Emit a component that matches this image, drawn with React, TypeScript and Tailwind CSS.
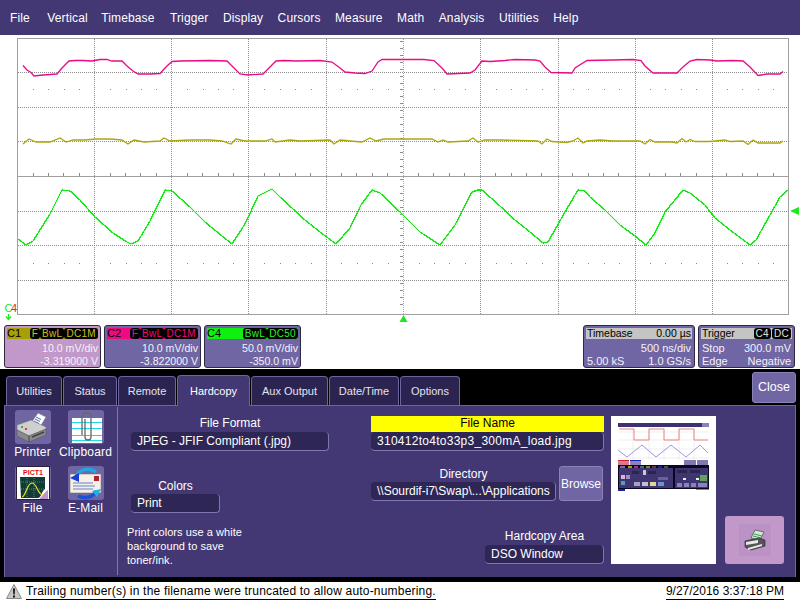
import React from "react";

const pink: [number, number][] = [[23,65.5],[27,70],[31,72.5],[34,76],[43,75],[57,74],[62,68],[69,61],[75,60.5],[83,60.5],[92,61],[100,59.5],[107,59.5],[112,61],[122,61],[127,66],[133,71],[138,74],[150,74],[160,73.5],[167,66],[172,61.5],[180,61],[210,60.5],[227,61],[232,66],[240,74],[248,75],[263,74],[270,67],[276,61],[284,60.5],[296,61],[320,60.5],[332,62],[340,68],[345,72],[355,73],[365,73.5],[372,71],[378,62],[382,59.5],[400,59.5],[424,59.5],[434,60.5],[442,68],[447,74],[470,73],[475,70],[482,61],[490,61.5],[505,60.5],[515,59.5],[535,60],[540,61],[545,67],[551,72.5],[572,73],[575,68],[587,60.5],[613,60],[633,59.5],[641,60.5],[645,66],[653,73],[677,73],[683,67],[690,61],[697,59.5],[710,60],[717,61],[733,60.5],[743,61],[750,67],[758,75.5],[767,74],[780,74],[783,71.5]];
const olive: [number, number][] = [[23,144],[29,139],[36,142],[50,142],[60,138],[66,142],[73,140],[85,140],[96,139],[110,139],[122,140],[128,144],[134,140],[144,142],[160,141],[164,138],[170,141],[190,140],[210,140],[222,141],[231,144],[236,139],[245,141],[265,141],[272,139],[275,142],[290,140],[300,141],[330,140],[334,144],[340,140],[350,141],[362,142],[370,138],[376,141],[384,139],[400,139],[432,139],[438,142],[443,140],[448,142],[468,141],[473,138],[478,142],[485,140],[500,140],[538,141],[542,144],[547,139],[552,141.5],[567,142.5],[573,141],[578,138],[583,143],[587,141],[600,140],[613,141],[640,141],[645,144],[650,139.5],[655,142],[672,142],[677,143],[682,138.5],[686,142],[690,139.5],[695,141.5],[710,141.5],[725,140],[730,141.5],[743,141],[748,144.5],[753,140],[758,143],[780,143],[783,141]];
const green: [number, number][] = [[18,239],[26,245],[33,241],[50,214],[62,190],[70,191],[80,200],[95,217],[113,233],[127,242],[131,244],[138,241],[150,221],[165,190],[172,191],[190,207],[205,222],[222,236],[232,244],[245,224],[258,196],[272,189],[280,197],[305,220],[320,232],[336,244],[350,228],[361,205],[372,190],[380,193],[400,212],[420,232],[440,245],[455,225],[472,192],[478,190],[482,190],[500,206],[515,220],[530,232],[543,243],[548,242],[565,212],[578,190],[585,191],[590,197],[605,210],[620,225],[635,236],[646,245],[655,233],[665,212],[683,190],[690,193],[705,205],[715,218],[730,230],[750,245],[756,240],[770,215],[780,197],[788,190]];

const toPoints = (p: [number, number][]) => p.map((q) => q.join(",")).join(" ");

const vGrid = [94.5, 171.5, 248.5, 326.5, 480.5, 558.5, 635.5, 712.5];
const hGrid = [72.5, 107.5, 141.5, 211.5, 245.5, 280.5];
const xTicks = Array.from({ length: 49 }, (_, i) => 33 + i * 15.42).filter((x) => !vGrid.some((v) => Math.abs(v - x) < 4) && Math.abs(x - 403) > 4 && x < 785);
const yTicks = Array.from({ length: 39 }, (_, i) => 41.5 + i * 6.92);

function Graph() {
  return (
    <svg viewBox="0 35 800 290" className="block w-[800px] h-[290px]" fontFamily="'Liberation Sans', Arial, sans-serif">
      <g shapeRendering="crispEdges">
        <rect x="17.5" y="38.5" width="771" height="276" fill="#fff" stroke="#a0a0a0" />
        {vGrid.map((x) => (
          <line key={x} x1={x} x2={x} y1="39" y2="314" stroke="#8c8c8c" strokeDasharray="1 1" />
        ))}
        <line x1="403.5" x2="403.5" y1="39" y2="314" stroke="#a8a8a8" strokeDasharray="1 1" />
        {hGrid.map((y) => (
          <line key={y} x1="18" x2="788" y1={y} y2={y} stroke="#8c8c8c" strokeDasharray="1 1" />
        ))}
        <line x1="18" x2="788" y1="176.5" y2="176.5" stroke="#a0a0a0" />
        {xTicks.map((x) => (
          <g key={x}>
            <line x1={x} x2={x} y1="173" y2="176" stroke="#8c8c8c" />
            <rect x={x} y="89" width="1" height="1" fill="#8c8c8c" />
            <rect x={x} y="263" width="1" height="1" fill="#8c8c8c" />
          </g>
        ))}
        {yTicks.map((y) => (
          <line key={y} x1="400" x2="403" y1={y} y2={y} stroke="#8c8c8c" />
        ))}
      </g>
      <polyline points={toPoints(pink)} fill="none" stroke="#ea0a86" strokeWidth="1.300" />
      <polyline points={toPoints(olive)} fill="none" stroke="#aca50c" strokeWidth="1.300" />
      <polyline points={toPoints(green)} fill="none" stroke="#7cf07c" strokeWidth="2.200" opacity=".35" />
      <polyline points={toPoints(green)} fill="none" stroke="#18e618" strokeWidth="1.300" shapeRendering="crispEdges" />
      <text x="4.500" y="312" fontSize="11" fill="#20e620">C</text>
      <text x="11" y="312" fontSize="11" fill="#d03030">4</text>
      <path d="M8.5 314v5M6 316.500l2.500 3 2.500-3" fill="none" stroke="#20e620" strokeWidth="1.200" />
      <path d="M790 211l9-4v8z" fill="#20e620" />
      <path d="M403.5 315l4 7h-8z" fill="#20e620" />
    </svg>
  );
}

function Tag({ children, color }: { children: React.ReactNode; color: string }) {
  return (
    <span className="bg-black rounded-[3px] px-[2px] h-[11px] flex items-center text-[10px] tracking-[0.3px] leading-none" style={{ color }}>
      {children}
    </span>
  );
}

function Channel({ name, tags, l1, l2, head, body, tagColor }: { name: string; tags: string[]; l1: string; l2: string; head: string; body: string; tagColor: string }) {
  return (
    <div className="w-[97px] h-[43px] rounded-[3px] border border-[#2e2a45] flex flex-col p-[2px] pb-0" style={{ background: body }}>
      <div className="h-[11px] flex items-center justify-between text-black text-[11px] leading-none" style={{ background: head }}>
        <span>{name}</span>
        <span className="flex gap-[0px]">
          {tags.map((t) => (
            <Tag key={t} color={tagColor}>{t}</Tag>
          ))}
        </span>
      </div>
      <div className="text-right text-[10.600px] leading-[13px] text-[#f4f2fa] mt-[3px]">{l1}</div>
      <div className="text-right text-[10.600px] leading-[13px] text-[#f4f2fa]">{l2}</div>
    </div>
  );
}

function InfoBox({ w, head, right, rows }: { w: string; head: React.ReactNode; right: React.ReactNode; rows: [string, string][] }) {
  return (
    <div className={`${w} h-[43px] rounded-[3px] border border-[#2e2a45] bg-[#6f66a3] p-[2px] pb-0 flex flex-col`}>
      <div className="h-[11px] bg-[#c4c4c4] flex items-center justify-between text-black text-[10.500px] leading-none px-[1px]">
        <span>{head}</span>
        {right}
      </div>
      {rows.map(([a, b], i) => (
        <div key={i} className={`flex justify-between text-[11px] leading-[13px] text-[#f4f2fa] px-[1px] ${i === 0 ? "mt-[3px]" : ""}`}>
          <span>{a}</span>
          <span>{b}</span>
        </div>
      ))}
    </div>
  );
}

function Tab({ label, w, active }: { label: string; w: string; active?: boolean }) {
  return (
    <div
      className={`${w} shrink-0 rounded-t-[4px] border border-b-0 border-[#6d64a0] flex items-center justify-center text-[11px] ${
        active ? "h-[31px] bg-[#433874] text-white relative z-10 -mb-[1px]" : "h-[29px] bg-[#2b2450] text-[#e4e2f0]"
      }`}
    >
      {label}
    </div>
  );
}

function Field({ w, children, className = "" }: { w: string; children: React.ReactNode; className?: string }) {
  return (
    <div className={`${w} h-[19px] shrink-0 bg-[#2e2655] rounded-[4px] border-b border-r border-[#7f76b4] flex items-center pl-[6px] text-[12px] text-white whitespace-nowrap overflow-hidden ${className}`}>
      {children}
    </div>
  );
}

function PrinterIcon() {
  return (
    <svg viewBox="0 0 35 34" className="w-[35px] h-[34px] block">
      <path d="M16 13l7-10 8 4-6 10z" fill="#fff" stroke="#777" strokeWidth=".5" />
      <path d="M21 7l5 2.500M20 9l5 2.500M19 11l5 2.500" stroke="#3a6fc0" strokeWidth="1" />
      <path d="M2 15l14-5 15 7v2L14 26 2 20z" fill="#cfcfcf" stroke="#666" strokeWidth=".5" />
      <path d="M2 20l12 6 17-7v6l-17 7-12-6z" fill="#8a8a8a" stroke="#555" strokeWidth=".5" />
      <path d="M14 26v6" stroke="#444" strokeWidth="1" />
      <path d="M17 27l12-5" stroke="#444" strokeWidth="1.500" />
      <rect x="6" y="16" width="2" height="2" fill="#40b040" />
      <rect x="10" y="18" width="2" height="2" fill="#d04040" />
    </svg>
  );
}

function ClipboardIcon() {
  return (
    <svg viewBox="0 0 35 34" className="w-[35px] h-[34px] block">
      <rect x="4" y="8" width="30" height="25" fill="#fff" />
      <path d="M4 12.500h30M4 18.500h30M4 25.500h30M4 30.500h30" stroke="#20d8e8" strokeWidth="1" />
      <path d="M14 25V7a4.500 4.500 0 019 0v20a3 3 0 01-6 0V9" fill="none" stroke="#666" strokeWidth="1.300" />
    </svg>
  );
}

function FileIcon() {
  return (
    <svg viewBox="0 0 36 34" className="w-[36px] h-[34px] block" fontFamily="'Liberation Sans', Arial, sans-serif">
      <rect x="1" y="0" width="34" height="34" fill="#2a1f3a" />
      <rect x="2" y="1" width="32" height="32" fill="#fff" />
      <text x="18" y="9" textAnchor="middle" fontSize="7" fontWeight="700" fill="#e01010">PICT1</text>
      <path d="M5 11h25v12c-4 3-3 8-7 9H6z" fill="#0f3d35" />
      <path d="M25 32c3-2 4-6 8-8v9h-8z" fill="#c196c9" />
      <path d="M7 31c4-1 5-14 10-14s5 11 11 12" fill="none" stroke="#f0e020" strokeWidth="1.200" />
      <path d="M6 16h24M6 23h24M12 12v19M19 12v19" stroke="#9fc4b8" strokeWidth=".5" strokeDasharray="1 1" />
    </svg>
  );
}

function MailIcon() {
  return (
    <svg viewBox="0 0 35 34" className="w-[35px] h-[34px] block">
      <path d="M2 8h31v19H2z" fill="#f4f2e8" stroke="#777" strokeWidth=".6" />
      <path d="M5 17h20M5 20h22M5 23h20" stroke="#6a7fc8" strokeWidth="1" />
      <rect x="26" y="10" width="5" height="5" fill="#b02030" />
      <path d="M8 11c3-8 13-10 20-5" fill="none" stroke="#1ea6e6" strokeWidth="3.500" />
      <path d="M2 12l9-5v9z" fill="#1a3fd0" />
      <path d="M28 25c-3 7-12 8-18 5" fill="none" stroke="#1a52d8" strokeWidth="3.500" />
      <path d="M33 23l-9 2 5 6z" fill="#20b0e8" />
    </svg>
  );
}

function IconButton({ label, icon }: { label: string; icon: React.ReactNode }) {
  return (
    <div className="w-[53px] h-[56px] flex flex-col items-center">
      <div className="w-[36px] h-[34px] rounded-[3px] bg-[#6f66a3] flex items-center justify-center overflow-hidden">{icon}</div>
      <div className="text-[12px] tracking-[0.2px] leading-[14px] mt-[1px] text-white whitespace-nowrap">{label}</div>
    </div>
  );
}

function Thumbnail() {
  return (
    <svg viewBox="0 0 91 68" className="w-[91px] h-[68px] block">
      <rect width="91" height="4" fill="#3b3270" />
      <rect x="84" y="0" width="7" height="4" fill="#8a82b8" />
      <path d="M0 9h91M0 17h91M0 26h91M0 35h91M15 4v33M31 4v33M46 4v33M61 4v33M76 4v33" stroke="#e4e4e4" strokeWidth=".6" />
      <path d="M1 6H16V17H31V6H46V17H61V6H76V17H90" fill="none" stroke="#f08080" strokeWidth="1" />
      <path d="M0 27L9 34 24 22 38 34 53 22 68 34 82 22 90 30" fill="none" stroke="#9a9ae0" strokeWidth="1" />
      <rect x="0" y="37" width="11" height="1.500" fill="#d02030" />
      <rect x="0" y="38.500" width="11" height="3.500" fill="#d87a8a" />
      <rect x="12" y="37" width="11" height="1.500" fill="#2020b0" />
      <rect x="12" y="38.500" width="11" height="3.500" fill="#8a82c0" />
      <rect x="66" y="37" width="12" height="5" fill="#8078b0" />
      <rect x="79" y="37" width="11" height="5" fill="#8078b0" />
      <rect y="42" width="91" height="24" fill="#0a0820" />
      <rect x="0" y="66" width="7" height="2" fill="#2020a0" />
      <rect x="78" y="66" width="13" height="1" fill="#888" />
      <rect x="1" y="45" width="54" height="20" fill="#3f3570" />
      <rect x="57" y="45" width="33" height="20" fill="#3f3570" />
      <rect x="2" y="43" width="5" height="2" fill="#7a6aa0" />
      <rect x="10" y="43" width="4" height="2" fill="#a8a000" />
      <rect x="16" y="43" width="4" height="2" fill="#b03070" />
      <rect x="22" y="43" width="4" height="2" fill="#407070" />
      <rect x="28" y="43" width="4" height="2" fill="#808030" />
      <rect x="34" y="43" width="4" height="2" fill="#703040" />
      <rect x="40" y="43" width="4" height="2" fill="#2020a0" />
      <rect x="46" y="43" width="4" height="2" fill="#306050" />
      <rect x="3" y="52" width="4" height="4" fill="#e0b0e0" />
      <rect x="8" y="52" width="4" height="4" fill="#9a8fc0" />
      <rect x="3" y="58" width="4" height="4" fill="#4aa0c0" />
      <rect x="14" y="48" width="7" height="3" fill="#2b2450" />
      <rect x="25" y="47" width="3" height="5" fill="#c8c8d8" />
      <rect x="30" y="48" width="8" height="3" fill="#2b2450" />
      <rect x="40" y="54" width="10" height="3" fill="#6a6098" />
      <rect x="16" y="59" width="6" height="4" fill="#a8a0c0" />
      <rect x="24" y="59" width="6" height="4" fill="#c0c0d0" />
      <rect x="32" y="59" width="6" height="4" fill="#e0d890" />
      <rect x="40" y="59" width="6" height="4" fill="#7090d0" />
      <rect x="82" y="52" width="7" height="6" fill="#60a060" />
      <rect x="59" y="47" width="10" height="3" fill="#2b2450" />
      <rect x="72" y="47" width="10" height="3" fill="#2b2450" />
      <rect x="65" y="55" width="3" height="2" fill="#f0f0f0" />
      <rect x="78" y="55" width="3" height="2" fill="#f0f0f0" />
      <rect x="59" y="60" width="5" height="4" fill="#8a82b8" />
      <rect x="66" y="60" width="5" height="4" fill="#8a82b8" />
      <rect x="73" y="60" width="5" height="4" fill="#8a82b8" />
      <rect x="80" y="60" width="9" height="4" fill="#8a82b8" />
    </svg>
  );
}

export default function App() {
  return (
    <div className="w-[800px] h-[600px] flex flex-col bg-white overflow-hidden" style={{ fontFamily: "'Liberation Sans', Arial, sans-serif" }}>
      <div className="h-[35px] bg-[#433874] flex items-center pl-[10px] gap-[14.400px] tracking-[0.14px] text-[12px] text-white shrink-0">
        <span className="mr-[3px]">File</span>
        <span className="-mr-[1px]">Vertical</span>
        <span className="mr-[1px]">Timebase</span>
        {["Trigger", "Display", "Cursors", "Measure", "Math", "Analysis", "Utilities", "Help"].map((m) => (
          <span key={m}>{m}</span>
        ))}
      </div>

      <Graph />

      <div className="h-[43px] flex pl-[4px] pr-[5px] shrink-0">
        <div className="flex gap-[3px]">
          <Channel name="C1" tags={["F", "BwL", "DC1M"]} l1="10.0 mV/div" l2="-3.319000 V" head="#a8a000" body="#c198c9" tagColor="#c8c020" />
          <Channel name="C2" tags={["F", "BwL", "DC1M"]} l1="10.0 mV/div" l2="-3.822000 V" head="#f00a80" body="#6f66a3" tagColor="#f00a80" />
          <Channel name="C4" tags={["BwL", "DC50"]} l1="50.0 mV/div" l2="-350.0 mV" head="#10f010" body="#6f66a3" tagColor="#30f030" />
        </div>
        <div className="ml-auto flex gap-[3px]">
          <InfoBox w="w-[112px]" head="Timebase" right={<span>0.00 µs</span>} rows={[["", "500 ns/div"], ["5.00 kS", "1.0 GS/s"]]} />
          <InfoBox w="w-[97px]" head="Trigger" right={<span className="flex gap-[1px]"><Tag color="#e0e0e0">C4</Tag><Tag color="#e0e0e0">DC</Tag></span>} rows={[["Stop", "300.0 mV"], ["Edge", "Negative"]]} />
        </div>
      </div>

      <div className="mt-[1px] h-[213px] bg-black flex flex-col pl-[4px] pr-[4px] shrink-0">
        <div className="h-[36px] flex items-end pl-[2px] gap-[1px] shrink-0">
          <Tab label="Utilities" w="w-[56px]" />
          <Tab label="Status" w="w-[54px]" />
          <Tab label="Remote" w="w-[58px]" />
          <Tab label="Hardcopy" w="w-[73px]" active />
          <Tab label="Aux Output" w="w-[77px]" />
          <Tab label="Date/Time" w="w-[70px]" />
          <Tab label="Options" w="w-[60px]" />
          <div className="ml-auto self-start mt-[3px] w-[44px] h-[31px] rounded-[3px] bg-[#6f66a3] border border-[#8a82b8] flex items-center justify-center text-[12.500px] text-white">
            Close
          </div>
        </div>

        <div className="h-[172px] bg-[#433874] border border-[#6d64a0] border-b-0 flex items-start text-white shrink-0">
          <div className="w-[113px] h-[168px] mt-[1px] border-r border-[#7f76b4] pt-[3px] grid grid-cols-[53px_53px] content-start pl-[1px] gap-y-0">
            <IconButton label="Printer" icon={<PrinterIcon />} />
            <IconButton label="Clipboard" icon={<ClipboardIcon />} />
            <IconButton label="File" icon={<FileIcon />} />
            <IconButton label="E-Mail" icon={<MailIcon />} />
          </div>

          <div className="w-[253px] pl-[9px] pt-[10px] shrink-0">
            <div className="pl-[4px]">
              <div className="w-[198px] h-[16px] text-center text-[12px] leading-[14px]">File Format</div>
              <Field w="w-[198px]">JPEG - JFIF Compliant (.jpg)</Field>
              <div className="w-[89px] mt-[28px] h-[15px] text-center text-[12px] leading-[15px]">Colors</div>
              <Field w="w-[89px]">Print</Field>
            </div>
            <div className="mt-[12px] w-[125px] text-[11px] tracking-[0.05px] leading-[14px]">
              Print colors use a white background to save toner/ink.
            </div>
          </div>

          <div className="w-[233px] pt-[10px] shrink-0 flex flex-col">
            <div className="h-[16px] bg-[#ffff00] text-black text-center text-[12px] leading-[15px]">File Name</div>
            <Field w="w-[233px]" className="rounded-[2px] tracking-[0.27px]">310412to4to33p3_300mA_load.jpg</Field>
            <div className="flex mt-[15px] gap-[3px]">
              <div className="w-[185px] flex flex-col">
                <div className="h-[16px] text-center text-[12px] leading-[17px]">Directory</div>
                <Field w="w-[185px]">\\Sourdif-i7\Swap\...\Applications</Field>
              </div>
              <div className="w-[44px] h-[35px] rounded-[3px] bg-[#6f66a3] border border-[#8a82b8] flex items-center justify-center text-[12px]">Browse</div>
            </div>
            <div className="self-end w-[119px] mt-[28px] flex flex-col">
              <div className="h-[16px] text-center text-[12px] leading-[15px]">Hardcopy Area</div>
              <Field w="w-[119px]">DSO Window</Field>
            </div>
          </div>

          <div className="ml-[7px] mt-[10px] w-[105px] h-[148px] bg-white pt-[7px] pl-[7px] shrink-0">
            <Thumbnail />
          </div>

          <div className="ml-[9px] mt-[110px] w-[59px] h-[48px] rounded-[3px] bg-[#c198c9] flex items-center justify-center shrink-0">
            <svg viewBox="0 0 32 32" className="w-[32px] h-[32px] block bg-[#bb92c6]">
              <path d="M12 14l4-8 9 2-4 8z" fill="#cfeccf" stroke="#333" strokeWidth=".6" />
              <path d="M14 12l8 2M15 10l8 2" stroke="#30a050" strokeWidth="1" />
              <path d="M6 17l14-3 6 2v6l-14 4-6-3z" fill="#555" stroke="#222" strokeWidth=".6" />
              <path d="M7 18l12-2v3L7 21z" fill="#e8e8e8" />
              <path d="M9 24l14-4v2l-14 4z" fill="#e8e8e8" />
            </svg>
          </div>
        </div>

        <div className="h-[5px]" />
      </div>

      <div className="h-[18px] pt-[1px] flex items-center pl-[6px] pr-[16px] text-black text-[12px] shrink-0">
        <svg viewBox="0 0 16 15" className="w-[16px] h-[15px] block shrink-0">
          <path d="M8 .5L15.500 14.500H.5z" fill="#c8c8c8" stroke="#8a8a8a" />
          <path d="M7 4.500h2l-.3 6H7.300zM7 11.500h2v2H7z" fill="#111" />
        </svg>
        <span className="ml-[4px] border-b border-black leading-[15px] tracking-[0.19px]">Trailing number(s) in the filename were truncated to allow auto-numbering.</span>
        <span className="ml-auto border-b border-black leading-[15px]">9/27/2016 3:37:18 PM</span>
      </div>
    </div>
  );
}
